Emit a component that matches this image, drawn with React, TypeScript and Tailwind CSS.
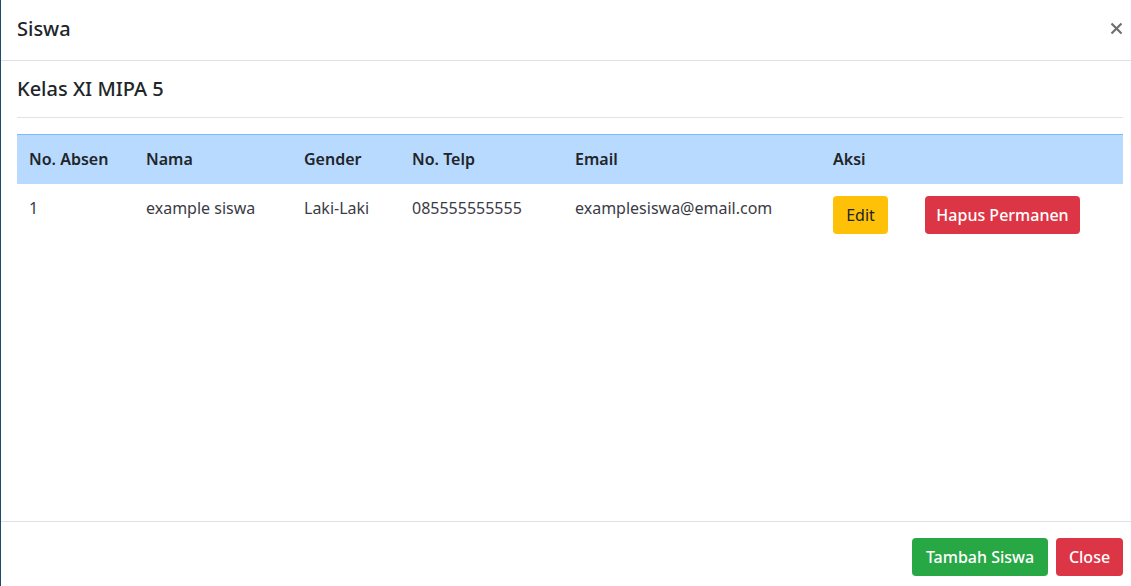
import React from "react";

const font = { fontFamily: "'Noto Sans', sans-serif" };

export default function App() {
  return (
    <div className="flex h-[586px] w-[1131px] overflow-hidden bg-white text-[#212529]" style={font}>
      <div className="w-px shrink-0 bg-[#1b4d6b]" />
      <div className="flex min-w-0 flex-1 flex-col">
        <div className="flex h-[61px] shrink-0 items-center justify-between border-b border-[#dee2e6] pl-4 pr-[8px]">
          <h5 className="-mt-[2px] text-[20px] font-medium leading-[24px] text-[#212529]">Siswa</h5>
          <button className="-mt-[4px] flex h-[14px] w-[14px] items-center justify-center" aria-label="Close">
            <svg width="13" height="13" viewBox="0 0 13 13">
              <path d="M1.5 1.5 L11.5 11.5 M11.5 1.5 L1.5 11.5" stroke="#6f6f6f" strokeWidth="2.2" strokeLinecap="butt" />
            </svg>
          </button>
        </div>
        <div className="flex h-[460px] shrink-0 flex-col pl-4 pr-[8px] pt-4">
          <h5 className="text-[20px] font-medium leading-[24px] text-[#212529]">Kelas XI MIPA 5</h5>
          <div className="mt-4 h-px bg-[#e3e3e3]" />
          <table className="mt-4 w-full border-collapse text-[16px] leading-[24px]">
            <thead>
              <tr className="h-[49px] border-t border-[#7abaff] bg-[#b8daff] text-left">
                <th className="w-[117px] px-3 font-semibold">No. Absen</th>
                <th className="w-[158px] px-3 font-semibold">Nama</th>
                <th className="w-[108px] px-3 font-semibold">Gender</th>
                <th className="w-[163px] px-3 font-semibold">No. Telp</th>
                <th className="w-[258px] px-3 font-semibold">Email</th>
                <th className="w-[92px] px-3 font-semibold">Aksi</th>
                <th className="px-3"></th>
              </tr>
            </thead>
            <tbody className="text-[#3a3b45]">
              <tr className="align-top">
                <td className="px-3 pt-3">1</td>
                <td className="px-3 pt-3">example siswa</td>
                <td className="px-3 pt-3">Laki-Laki</td>
                <td className="px-3 pt-3">085555555555</td>
                <td className="px-3 pt-3">examplesiswa@email.com</td>
                <td className="px-3 py-3">
                  <button className="h-[38px] w-[55px] rounded-[4px] bg-[#ffc107] text-[#212529]">Edit</button>
                </td>
                <td className="px-3 py-3">
                  <button className="h-[38px] w-[155px] rounded-[4px] bg-[#dc3545] font-medium text-white">Hapus Permanen</button>
                </td>
              </tr>
            </tbody>
          </table>
        </div>
        <div className="flex shrink-0 justify-end gap-2 border-t border-[#dee2e6] pl-4 pr-[8px] pt-4">
          <button className="h-[38px] w-[136px] rounded-[4px] bg-[#28a745] font-medium text-white">Tambah Siswa</button>
          <button className="h-[38px] w-[67px] rounded-[4px] bg-[#dc3545] font-medium text-white">Close</button>
        </div>
      </div>
    </div>
  );
}
